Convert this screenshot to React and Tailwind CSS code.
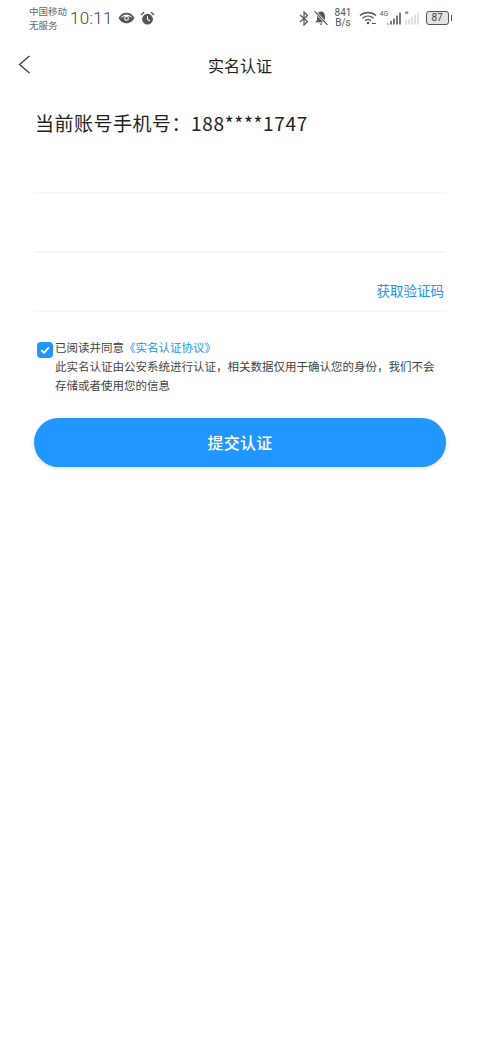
const font = { fontFamily: '"Noto Sans CJK SC", sans-serif' };

function StatusBar() {
    return (
        <div className="flex h-[36px] items-center justify-between pl-[29px] pr-[28px] text-[#666]">
            <div className="flex items-center">
                <div className="w-[41px] text-[9.5px] leading-[14px]">
                    <div className="whitespace-nowrap">中国移动</div>
                    <div className="whitespace-nowrap">无服务</div>
                </div>
                <span className="text-[17px] leading-none font-light font-['Roboto'] tracking-[0.3px] text-[#444]">10:11</span>
                <svg className="ml-[5px]" width="17" height="12" viewBox="0 0 17 12">
                    <path d="M0.5 6C3 2 5.5 0.8 8.5 0.8S14 2 16.5 6C14 10 11.5 11.2 8.5 11.2S3 10 0.5 6Z" fill="#555" />
                    <path d="M2.5 6C4.5 3.2 6.5 2.4 8.5 2.4S12.5 3.2 14.5 6C12.5 4.6 10.5 4.2 8.5 4.2S4.5 4.6 2.5 6Z" fill="#fff" />
                    <circle cx="8.5" cy="6.4" r="2.4" fill="#fff" />
                    <circle cx="8.5" cy="6.4" r="1.3" fill="#555" />
                </svg>
                <svg className="ml-[5px]" width="15" height="15" viewBox="0 0 15 15">
                    <circle cx="7.5" cy="8.2" r="5.4" fill="#555" />
                    <path d="M7.5 5V8.5L10 10" stroke="#fff" strokeWidth="1.1" fill="none" />
                    <path d="M1 4L4 1.2M14 4L11 1.2" stroke="#555" strokeWidth="1.4" />
                </svg>
            </div>
            <div className="flex items-center">
                <svg width="10" height="15" viewBox="0 0 10 15">
                    <path d="M1 4L8.5 10.5L5 14V1L8.5 4.5L1 11" stroke="#555" strokeWidth="1.2" fill="none" />
                </svg>
                <svg className="ml-[4px]" width="16" height="16" viewBox="0 0 15 15">
                    <path d="M7.5 1.5C5 1.5 3.8 3.5 3.8 6V9.5L2 11.5H13L11.2 9.5V6C11.2 3.5 10 1.5 7.5 1.5Z" fill="#555" />
                    <path d="M6 12.6H9L7.5 14.2Z" fill="#555" />
                    <path d="M1.5 1L13.5 14" stroke="#fff" strokeWidth="2.4" />
                    <path d="M1.5 1L13.5 14" stroke="#555" strokeWidth="1.1" />
                </svg>
                <div className="ml-[6px] w-[17px] text-center text-[10px] leading-[10px] font-['Roboto'] text-[#555]">
                    <div>841</div>
                    <div>B/s</div>
                </div>
                <svg className="ml-[7px]" width="18" height="14" viewBox="0 0 18 14">
                    <path d="M1 4.5C5.5 0.5 12.5 0.5 17 4.5M3.5 7.2C6.8 4.4 11.2 4.4 14.5 7.2M6 9.8C7.8 8.4 10.2 8.4 12 9.8" stroke="#555" strokeWidth="1.4" fill="none" />
                    <circle cx="9" cy="12" r="1.3" fill="#555" />
                    <path d="M13 12.5H17" stroke="#555" strokeWidth="1" />
                </svg>
                <div className="relative ml-[3px] h-[15px] w-[22px]">
                    <span className="absolute left-0 top-[-1px] text-[7px] leading-[8px] font-['Roboto'] text-[#555]">4G</span>
                    <svg className="absolute left-0 top-0" width="22" height="15" viewBox="0 0 22 15">
                        <path d="M8 13.5V12.5M11 13.5V10M14 13.5V7.5M17 13.5V4.5M20 13.5V1.5" stroke="#555" strokeWidth="1.6" />
                    </svg>
                </div>
                <div className="relative ml-[3px] h-[15px] w-[16px]">
                    <span className="absolute left-0 top-[-2px] text-[8px] leading-[8px] font-['Roboto'] text-[#555]">×</span>
                    <svg className="absolute left-0 top-0" width="16" height="15" viewBox="0 0 16 15">
                        <path d="M1 13.5V9M4 13.5V8M7 13.5V6M10 13.5V4M13 13.5V1.5" stroke="#ccc" strokeWidth="1.2" />
                    </svg>
                </div>
                <div className="ml-[5px] flex h-[14px] w-[23px] items-center justify-center rounded-[3px] border border-[#555] bg-[#e3e3e3] text-[10px] leading-none font-['Roboto'] text-[#444]">87</div>
                <div className="ml-[2px] h-[6px] w-[1.5px] bg-[#555]" />
            </div>
        </div>
    );
}

function FieldRow({ children }) {
    return (
        <div className="flex h-[59px] items-end justify-end border-b-2 border-[#f6f6f6] pb-[10px]">
            {children}
        </div>
    );
}

export default function App() {
    return (
        <div className="min-h-[1040px] bg-white" style={font}>
            <StatusBar />

            {/* nav */}
            <div className="relative flex h-[58px] items-center justify-center">
                <svg className="absolute left-[18px] top-[19px]" width="13" height="19" viewBox="0 0 13 19">
                    <path d="M11.5 1L1.5 9.5L11.5 18" stroke="#333" strokeWidth="1.2" fill="none" />
                </svg>
                <h1 className="text-[16px] text-[#222]">实名认证</h1>
            </div>

            <div className="px-[34px]">
                <p className="mt-[14px] pl-[1px] text-[19px] leading-[30px] tracking-[0.5px] text-[#222]">
                    当前账号手机号：<span className="tracking-[0.7px]">188****1747</span>
                </p>

                <div className="h-[56px] border-b-2 border-[#f6f6f6]" />
                <FieldRow />
                <FieldRow>
                    <span className="mr-[2px] text-[13.5px] leading-[20px] text-[#2196f3]">获取验证码</span>
                </FieldRow>

                <div className="mt-[26px] flex pl-[3px]">
                    <div className="mt-[4px] flex h-[16px] w-[16px] shrink-0 items-center justify-center rounded-[4px] bg-[#2196ff]">
                        <svg width="12" height="12" viewBox="0 0 12 12">
                            <path d="M2.2 6.2L5 8.8L9.8 3.4" stroke="#fff" strokeWidth="1.8" fill="none" />
                        </svg>
                    </div>
                    <div className="ml-[2px] w-[385px] text-[11.5px] leading-[19px] text-[#444]">
                        <div>已阅读并同意<span className="text-[#2196f3]">《实名认证协议》</span></div>
                        <div>此实名认证由公安系统进行认证，相关数据仅用于确认您的身份，我们不会存储或者使用您的信息</div>
                    </div>
                </div>

                <button className="mt-[23px] flex h-[49px] w-full items-center justify-center rounded-full bg-[#2196ff] pb-[2px] text-[16px] font-medium tracking-[0.3px] text-white shadow-[0_1px_4px_rgba(0,0,0,0.15)]">
                    提交认证
                </button>
            </div>
        </div>
    );
}
